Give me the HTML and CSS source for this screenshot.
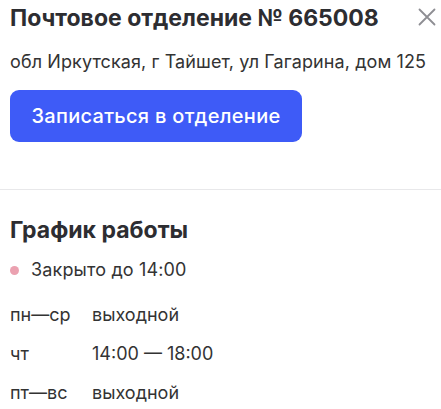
FILE: index.html
```html
<!DOCTYPE html>
<html lang="ru">
<head>
<meta charset="utf-8">
<link rel="stylesheet" href="styles.css">
</head>
<body>
<div class="panel">
  <section class="top">
    <div class="head">
      <h1 class="title">Почтовое отделение № 665008</h1>
      <button class="close" aria-label="Закрыть">
        <svg width="18" height="18" viewBox="0 0 18 18"><path d="M1.5 1.5L16.5 16.5M16.5 1.5L1.5 16.5" stroke="#8e8e93" stroke-width="1.8" stroke-linecap="round"/></svg>
      </button>
    </div>
    <p class="address">обл Иркутская, г Тайшет, ул Гагарина, дом 125</p>
    <button class="cta">Записаться в отделение</button>
  </section>
  <section class="schedule">
    <h2 class="sub">График работы</h2>
    <div class="status"><span class="dot"></span>Закрыто до 14:00</div>
    <div class="rows">
      <div class="row"><span class="day">пн—ср</span><span>выходной</span></div>
      <div class="row"><span class="day">чт</span><span>14:00 — 18:00</span></div>
      <div class="row"><span class="day">пт—вс</span><span>выходной</span></div>
    </div>
  </section>
</div>
</body>
</html>
```

FILE: styles.css
```css
* { box-sizing: border-box; }
html, body { margin: 0; padding: 0; background: #fff; }
body { font-family: Inter, "Noto Sans", sans-serif; color: #333; }
.panel { width: 441px; }
.top { padding: 4px 10px 0 10px; border-bottom: 1px solid #e8e8ea; height: 190px; }
.head { display: flex; justify-content: space-between; align-items: flex-start; }
.title { margin: 0; font-size: 23px; line-height: 28px; font-weight: 700; color: #2d2d31; }
.close { border: 0; background: none; padding: 0; margin: 4px -5px 0 0; width: 18px; height: 18px; display: flex; align-items: center; justify-content: center; }
.address { margin: 18px 0 0 0; font-size: 18px; line-height: 24px; color: #333; letter-spacing: 0.1px; white-space: nowrap; }
.cta { margin-top: 16px; width: 292px; height: 52px; border: 0; border-radius: 9px; background: #3e5bf7; color: #fff; font-family: Inter, sans-serif; font-size: 20px; font-weight: 500; letter-spacing: 0.3px; }
.schedule { padding: 26px 10px 0 10px; }
.sub { margin: 0; font-size: 23px; line-height: 28px; font-weight: 700; color: #2d2d31; }
.status { margin-top: 14px; display: flex; align-items: center; font-size: 18px; line-height: 24px; letter-spacing: 0.15px; }
.dot { width: 9px; height: 9px; border-radius: 50%; background: #eba1b0; margin: 0 12px 0 0; }
.rows { margin-top: 21px; display: flex; flex-direction: column; gap: 15px; }
.row { display: flex; font-size: 18px; line-height: 24px; }
.day { width: 82px; }
```
